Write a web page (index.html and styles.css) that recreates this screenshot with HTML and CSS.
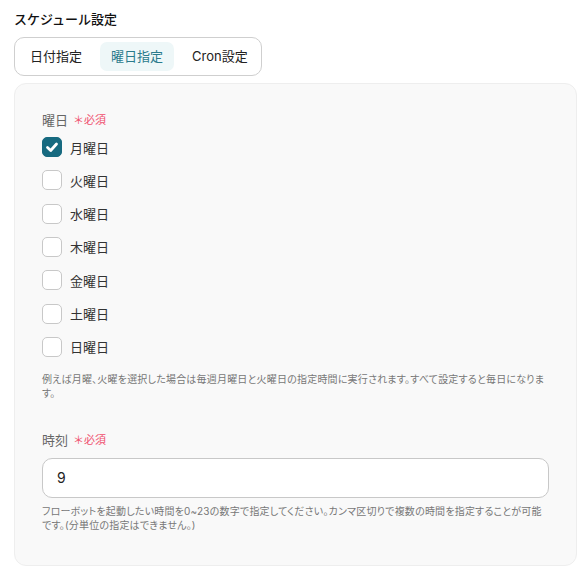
FILE: index.html
```html
<!DOCTYPE html>
<html lang="ja">
<head>
<meta charset="utf-8">
<link rel="stylesheet" href="styles.css">
</head>
<body>
<div class="page">
  <div class="title">スケジュール設定</div>
  <div class="tabs">
    <div class="tab">日付指定</div>
    <div class="tab active">曜日指定</div>
    <div class="tab">Cron設定</div>
  </div>
  <div class="panel">
    <div class="field">
      <div class="label">曜日<span class="req">＊必須</span></div>
      <div class="checks">
        <label class="check"><span class="box checked"><svg viewBox="0 0 20 20" width="20" height="20"><path d="M5.5 10.5 L8.7 13.5 L14.5 7" fill="none" stroke="#fff" stroke-width="2.8" stroke-linecap="round" stroke-linejoin="round"/></svg></span>月曜日</label>
        <label class="check"><span class="box"></span>火曜日</label>
        <label class="check"><span class="box"></span>水曜日</label>
        <label class="check"><span class="box"></span>木曜日</label>
        <label class="check"><span class="box"></span>金曜日</label>
        <label class="check"><span class="box"></span>土曜日</label>
        <label class="check"><span class="box"></span>日曜日</label>
      </div>
      <p class="help">例えば月曜、火曜を選択した場合は毎週月曜日と火曜日の指定時間に実行されます。すべて設定すると毎日になります。</p>
    </div>
    <div class="field time">
      <div class="label">時刻<span class="req">＊必須</span></div>
      <div class="input">9</div>
      <p class="help">フローボットを起動したい時間を0~23の数字で指定してください。カンマ区切りで複数の時間を指定することが可能です。(分単位の指定はできません。)</p>
    </div>
  </div>
</div>
</body>
</html>
```

FILE: styles.css
```css
* { box-sizing: border-box; }
html, body { margin: 0; padding: 0; background: #fff; }
body {
  font-family: Inter, "Noto Sans CJK JP", sans-serif;
  color: #222;
}
.page {
  padding: 9px 8px 0 14px;
}
.title {
  font-size: 13px;
  font-weight: 500;
  line-height: 20px;
  color: #111;
}
.tabs {
  display: inline-flex;
  gap: 7px;
  margin-top: 8px;
  padding: 4px 2px 4px 4px;
  border: 1px solid #cfcfcf;
  border-radius: 10px;
  background: #fff;
}
.tab {
  font-size: 13px;
  line-height: 29px;
  height: 29px;
  padding: 0 11px;
  border-radius: 7px;
  color: #222;
}
.tab.active {
  background: #eef7f8;
  color: #2a7b8c;
}
.panel {
  margin-top: 7px;
  background: #f9f9f9;
  border: 1px solid #eeeeee;
  border-radius: 12px;
  padding: 21px 27px 0 27px;
  height: 483px;
}
.label {
  font-size: 13px;
  line-height: 30px;
  color: #666;
  display: flex;
  align-items: center;
}
.req {
  font-size: 11px;
  color: #f0506e;
  margin-left: 5px;
}
.checks {
  display: flex;
  flex-direction: column;
  gap: 13.33px;
  margin-top: 2px;
}
.check {
  display: flex;
  align-items: center;
  gap: 8px;
  font-size: 13px;
  color: #333;
  height: 20px;
}
.box {
  width: 20px;
  height: 20px;
  border: 1px solid #c8c8c8;
  border-radius: 5px;
  background: #fff;
  display: block;
}
.box.checked {
  background: #176a80;
  border-color: #176a80;
}
.box svg { display: block; margin: -1px; }
.help {
  margin: 15px 0 0;
  font-size: 10px;
  line-height: 14px;
  color: #777;
  font-feature-settings: "palt";
  letter-spacing: 0.2px;
}
.time { margin-top: 25px; }
.input {
  margin-top: 3px;
  height: 40px;
  width: 507px;
  background: #fff;
  border: 1px solid #c8c8c8;
  border-radius: 10px;
  font-size: 14px;
  line-height: 38px;
  padding: 0 14px;
  color: #222;
}
.time .help { margin-top: 6px; }
```
